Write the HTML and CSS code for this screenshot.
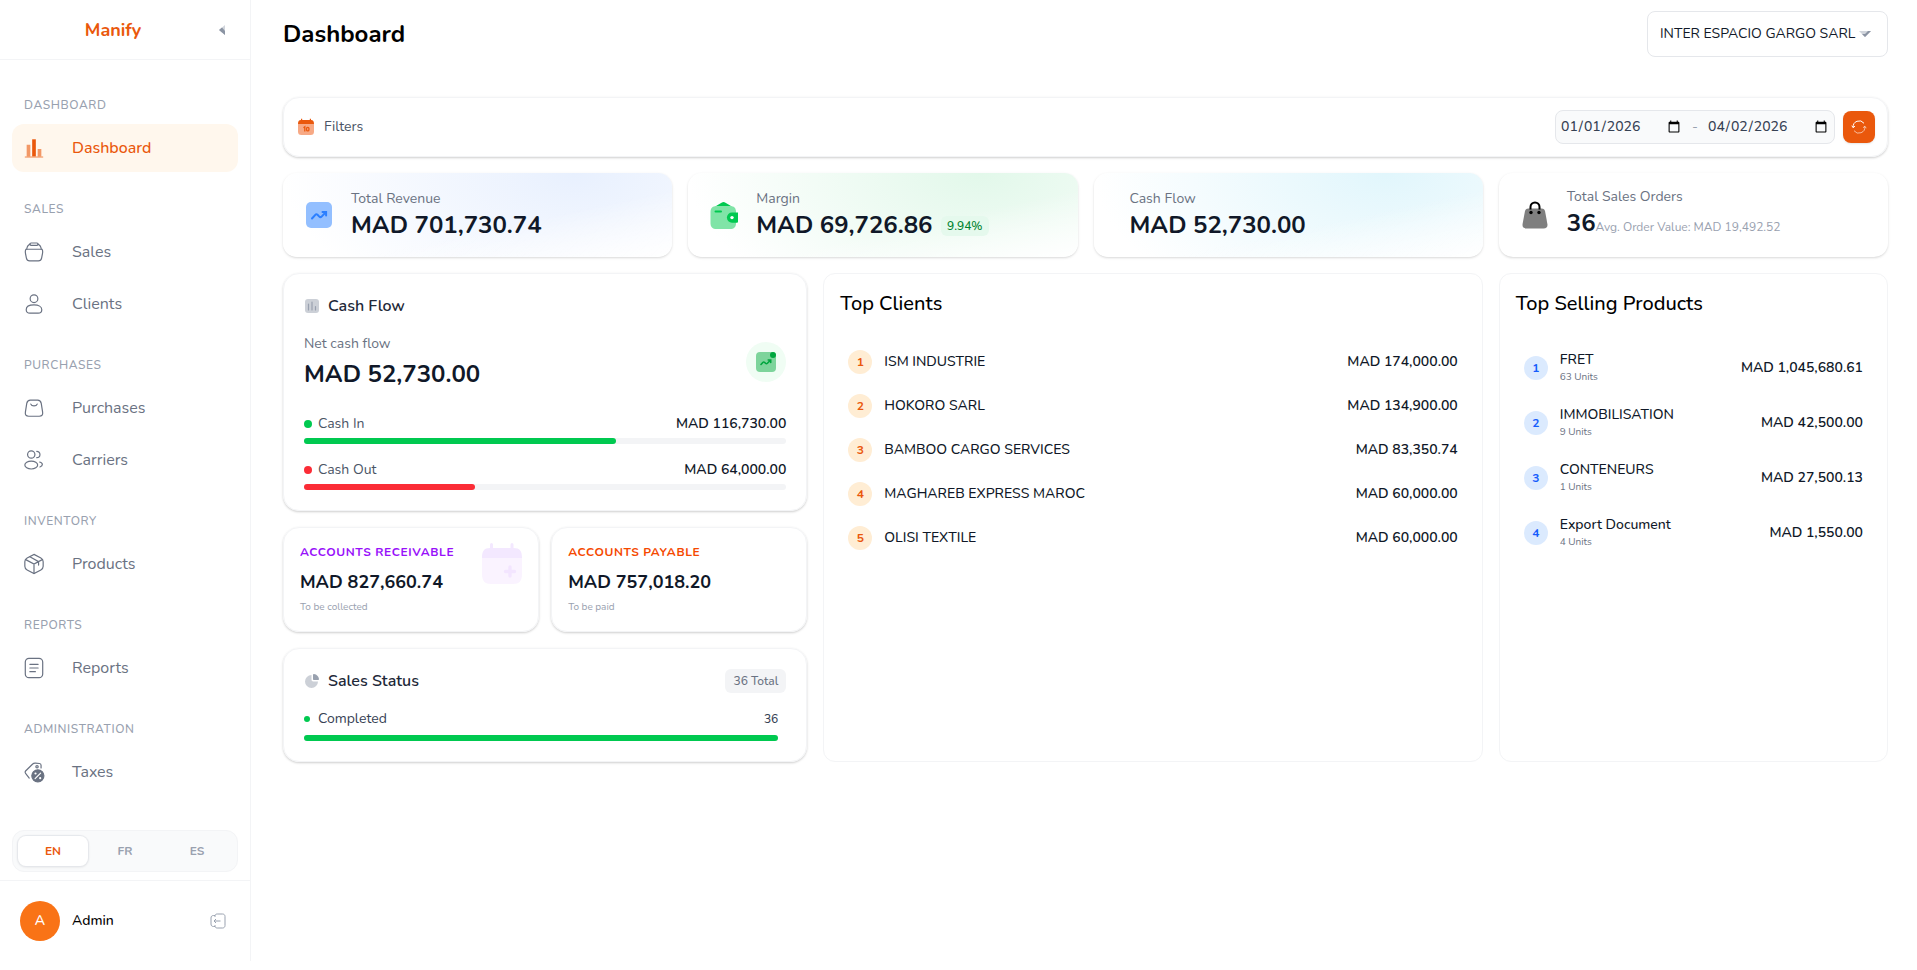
FILE: index.html
```html
<!DOCTYPE html>
<html lang="en">
<head>
  <meta charset="UTF-8">
  <meta name="viewport" content="width=device-width, initial-scale=1.0">
  <title>Manify - Dashboard</title>
  <link rel="stylesheet" href="styles.css">
</head>
<body>
<div class="app">
  <aside class="sidebar">
    <div class="brand">
      <span class="brand-name">Manify</span>
      <button class="collapse-btn" aria-label="Collapse menu">
        <svg viewBox="0 0 14 14"><path d="M9 2v10L3 7z" fill="#d1d5dc"/><path d="M3 7l3-2.500L9 8v4z" fill="#8b94a3"/></svg>
      </button>
    </div>

    <nav class="nav">
      <h3>Dashboard</h3>
      <a href="#" class="nav-item active">
        <svg viewBox="0 0 24 24" fill="currentColor"><path d="M2 21.2h20v1.3H2z" opacity=".6"/><path d="M4 8.5h4v12.7H4zM16 13h4v8.2h-4z" opacity=".6"/><path d="M10 2.5h4v18.7h-4z"/></svg>
        <span>Dashboard</span>
      </a>

      <h3>Sales</h3>
      <a href="#" class="nav-item">
        <svg viewBox="0 0 24 24" class="line"><path d="M3.2 9h17.6c.9 1.3.8 3 .4 5l-.9 4.6c-.5 2.2-1.500 3-3.500 3H7.2c-2 0-3-.8-3.500-3L2.800 14c-.4-2-.5-3.700.4-5z"/><path d="M4 9c.5-3 1.600-5 4-5.600M20 9c-.5-3-1.600-5-4-5.600"/><rect x="7.5" y="2.2" width="9" height="2.6" rx="1.3"/></svg>
        <span>Sales</span>
      </a>
      <a href="#" class="nav-item">
        <svg viewBox="0 0 24 24" class="line"><circle cx="12" cy="6.2" r="4.2"/><path d="M12 13c5 0 8.500 2 8.500 5.200 0 2.700-1.700 3.800-4 3.800h-9c-2.300 0-4-1.100-4-3.800C3.500 15 7 13 12 13z"/></svg>
        <span>Clients</span>
      </a>

      <h3>Purchases</h3>
      <a href="#" class="nav-item">
        <svg viewBox="0 0 24 24" class="line"><path d="M8 3.500h8c2.300 0 3.400 1 3.900 3.500l1.500 9.500c.5 3-.7 4.500-3.600 4.500H6.200c-2.900 0-4.100-1.500-3.600-4.500L4.100 7c.5-2.500 1.600-3.500 3.900-3.500z"/><path d="M8.500 7.800c1 2.600 6 2.600 7 0"/></svg>
        <span>Purchases</span>
      </a>
      <a href="#" class="nav-item">
        <svg viewBox="0 0 24 24" class="line"><circle cx="9" cy="6" r="4"/><path d="M15 9.500a3.500 3.500 0 0 0 0-7"/><ellipse cx="9" cy="17.5" rx="7" ry="4.3"/><path d="M18.200 14.200c1.700.4 2.900 1.400 2.900 2.700 0 1.200-1 2.200-2.600 2.700"/></svg>
        <span>Carriers</span>
      </a>

      <h3>Inventory</h3>
      <a href="#" class="nav-item">
        <svg viewBox="0 0 24 24" class="line"><path d="M12 1.500l7.500 4c1.800 1 2.500 2 2.500 4v5c0 2-.7 3-2.500 4L12 22.500l-7.500-4c-1.800-1-2.500-2-2.500-4v-5c0-2 .7-3 2.500-4z"/><path d="M21 7.200L12 12 3 7.200M12 12v10.300M7.500 4.200L17 9.500v3.700"/></svg>
        <span>Products</span>
      </a>

      <h3>Reports</h3>
      <a href="#" class="nav-item">
        <svg viewBox="0 0 24 24" class="line"><rect x="2.5" y="1.5" width="19" height="21" rx="4"/><path d="M7.500 8h9M7.500 12h9M7.500 16h6"/></svg>
        <span>Reports</span>
      </a>

      <h3>Administration</h3>
      <a href="#" class="nav-item">
        <svg viewBox="0 0 24 24" class="line"><path d="M6.800 18.700l-4-5.200c-.8-1-.8-1.700 0-2.600l7.500-7.400c1-1 2-1.300 3.200-1.200l4.500.4c1.100.1 1.700.8 1.700 1.800v3"/><circle cx="15.3" cy="6.3" r="1.3"/><circle cx="16.2" cy="16.2" r="6.6" fill="#6a7282"/><path d="M13.200 19.200l6-6" stroke="#fff"/><path d="M13.600 13.600h.1M18.700 18.700h.1" stroke="#fff" stroke-width="2.3"/></svg>
        <span>Taxes</span>
      </a>
    </nav>

    <div class="langs">
      <button class="lang selected">EN</button>
      <button class="lang">FR</button>
      <button class="lang">ES</button>
    </div>

    <div class="user">
      <span class="avatar">A</span>
      <span class="user-name">Admin</span>
      <button class="logout-btn" aria-label="Log out">
        <svg viewBox="0 0 16 16" fill="none" stroke="#99a1af"><path d="M5 4V3.200C5 1.800 5.800 1 7.200 1h5.300C14 1 15 2 15 3.500v9c0 1.500-1 2.500-2.500 2.500H7.200C5.800 15 5 14.200 5 12.800V12"/><path d="M5 2.500H3.500C2 2.500 1 3.300 1 5v6c0 1.700 1 2.500 2.500 2.500H5M10.500 8H4M6 6L4 8l2 2"/></svg>
      </button>
    </div>
  </aside>

  <main class="main">
    <header class="topbar">
      <h1>Dashboard</h1>
      <div class="company">
        <select aria-label="Company">
          <option>INTER ESPACIO GARGO SARL</option>
        </select>
        <svg viewBox="0 0 12 8"><path d="M0 1h12L6 7z" fill="#d1d5dc"/><path d="M12 1L6 7 3 4l3 0 3-3z" fill="#8b94a3"/></svg>
      </div>
    </header>

    <section class="filters">
      <svg class="filter-icon" viewBox="0 0 18 18"><path d="M1 6h16v7.500c0 2.500-1 3.500-3.500 3.500h-9C2 17 1 16 1 13.500z" fill="#f7a985"/><path d="M1 6c0-2.700.8-4 3-4V.8h1.200V2h7.600V.8H14V2c2.200 0 3 1.300 3 4z" fill="#ea580c"/><path d="M6.500 9.700l1.300-.9v4.700" fill="none" stroke="#ea580c" stroke-width="1.3"/><rect x="9.6" y="9.3" width="2.3" height="3.6" rx="1" fill="none" stroke="#ea580c" stroke-width="1.3"/></svg>
      <span>Filters</span>
      <div class="dates">
        <input type="date" value="2026-01-01" aria-label="Start date">
        <span class="dash">-</span>
        <input type="date" value="2026-04-02" aria-label="End date">
      </div>
      <button class="refresh-btn" aria-label="Refresh">
        <svg viewBox="0 0 16 16" fill="none" stroke="#fff"><path d="M2.200 8.500A6 6 0 0 1 13 4.300"/><path d="M.8 6.700l1.400 2 1.800-1.600"/><path d="M13.800 7.500A6 6 0 0 1 3 11.700M15.200 9.200l-1.400-2L12 8.800" opacity=".6"/></svg>
      </button>
    </section>

    <section class="stats">
      <div class="stat blue">
        <svg viewBox="0 0 28 28"><rect x="1" y="1" width="26" height="26" rx="5" fill="#93bfff"/><path d="M7 17.500l3.300-3.700c.8-.9 1.400-.8 2.200 0l1.800 1.800c.8.8 1.500.8 2.300 0l4.400-4.600M17.500 11h3.600v3.600" fill="none" stroke="#2b7fff" stroke-width="2" stroke-linecap="round"/></svg>
        <div>
          <p class="stat-label">Total Revenue</p>
          <p class="stat-value">MAD 701,730.74</p>
        </div>
      </div>
      <div class="stat green">
        <svg viewBox="0 0 28 28"><path d="M6 5l5.500-3.300c1.600-1 2.500-1 4 0L21 5z" fill="#00c950"/><path d="M7 5h13c4 0 6 2 6 6v11c0 4-2 6-6 6H6.500c-4 0-6-2-6-6V11c0-4 2-6 6.500-6z" fill="#80e4a7"/><path d="M5.500 10.500H11" stroke="#00c950" stroke-width="2" stroke-linecap="round"/><path d="M28 11.500h-6a5 5 0 0 0 0 10.200h4.500c1 0 1.500-.5 1.500-1.500z" fill="#00c950"/><circle cx="22" cy="16.6" r="1.7" fill="#fff"/></svg>
        <div>
          <p class="stat-label">Margin</p>
          <p class="stat-value">MAD 69,726.86 <span class="pill">9.94%</span></p>
        </div>
      </div>
      <div class="stat cyan">
        <div>
          <p class="stat-label">Cash Flow</p>
          <p class="stat-value">MAD 52,730.00</p>
        </div>
      </div>
      <div class="stat">
        <svg viewBox="0 0 28 28"><path d="M7.500 7.500h13c2.300 0 3.200 1 3.600 3l2.300 12.500c.5 3-.9 4.500-3.800 4.500H5.400c-2.900 0-4.300-1.500-3.800-4.500l2.300-12.500c.4-2 1.300-3 3.600-3z" fill="#7f7f7f"/><path d="M9.500 8.500V6a4.500 4.500 0 0 1 9 0v2.500" fill="none" stroke="#000" stroke-width="2"/><circle cx="10" cy="11.5" r="1.7"/><circle cx="18" cy="11.5" r="1.7"/></svg>
        <div>
          <p class="stat-label">Total Sales Orders</p>
          <p class="stat-value">36<small>Avg. Order Value: MAD 19,492.52</small></p>
        </div>
      </div>
    </section>

    <section class="panels">
      <div class="column">
        <div class="card">
          <h2 class="card-title">
            <svg viewBox="0 0 14 14"><rect width="14" height="14" rx="3" fill="#ccd0d7"/><path d="M3.500 5v6M7 3v8M10.500 7.500V11" stroke="#99a1af" stroke-width="1.2" stroke-linecap="round"/></svg>
            Cash Flow
          </h2>
          <div class="net">
            <div>
              <p class="net-label">Net cash flow</p>
              <p class="net-value">MAD 52,730.00</p>
            </div>
            <span class="net-icon">
              <svg viewBox="0 0 20 20"><rect width="20" height="20" rx="4" fill="#7dd49b"/><path d="M5 12.500l1.800-2c.7-.7 1.200-.7 1.900 0l.8.8c.7.7 1.200.7 1.900 0l3-3.100M12.200 8h2.500v2.500" fill="none" stroke="#00a63e" stroke-width="1.6" stroke-linecap="round"/><circle cx="17" cy="3" r="3" fill="#00a63e"/></svg>
            </span>
          </div>
          <div class="flow">
            <div class="flow-head"><i class="dot in"></i><span>Cash In</span><b>MAD 116,730.00</b></div>
            <div class="bar"><div class="fill in" style="width: 64.6%"></div></div>
          </div>
          <div class="flow">
            <div class="flow-head"><i class="dot out"></i><span>Cash Out</span><b>MAD 64,000.00</b></div>
            <div class="bar"><div class="fill out" style="width: 35.4%"></div></div>
          </div>
        </div>

        <div class="accounts">
          <div class="account receivable">
            <h3>Accounts Receivable</h3>
            <p class="account-value">MAD 827,660.74</p>
            <p class="account-note">To be collected</p>
            <svg viewBox="0 0 40 42"><path d="M0 15h40v16c0 7-3 10-9 10H9c-6 0-9-3-9-10z" fill="#faf3ff"/><path d="M0 15c0-7 2-10 8-10V1.500a1.500 1.500 0 0 1 3 0V5h17.500V1.500a1.500 1.500 0 0 1 3 0V5C38 5 40 8 40 15z" fill="#f3e8ff"/><path d="M28 24v9M23.500 28.500h9" stroke="#f3e5ff" stroke-width="3.4" stroke-linecap="round"/></svg>
          </div>
          <div class="account payable">
            <h3>Accounts Payable</h3>
            <p class="account-value">MAD 757,018.20</p>
            <p class="account-note">To be paid</p>
          </div>
        </div>

        <div class="card">
          <div class="status-head">
            <h2 class="card-title">
              <svg viewBox="0 0 14 14"><path d="M6.500 1v4.500c0 1.300.6 2 2 2H13A6.500 6.500 0 1 1 6.500 1z" fill="#ccd0d7"/><path d="M8 .5C8 .2 8.500 0 9 0c2.800.5 4.500 2.200 5 5 0 .6-.3 1-.8 1H9c-.7 0-1-.3-1-1z" fill="#99a1af"/></svg>
              Sales Status
            </h2>
            <span class="total">36 Total</span>
          </div>
          <div class="status-row">
            <div class="flow-head"><i class="dot small in"></i><span>Completed</span><em>36</em></div>
            <div class="bar"><div class="fill in" style="width: 100%"></div></div>
          </div>
        </div>
      </div>

      <div class="list-card clients">
        <h2>Top Clients</h2>
        <ol>
          <li><i>1</i><span>ISM INDUSTRIE</span><b>MAD 174,000.00</b></li>
          <li><i>2</i><span>HOKORO SARL</span><b>MAD 134,900.00</b></li>
          <li><i>3</i><span>BAMBOO CARGO SERVICES</span><b>MAD 83,350.74</b></li>
          <li><i>4</i><span>MAGHAREB EXPRESS MAROC</span><b>MAD 60,000.00</b></li>
          <li><i>5</i><span>OLISI TEXTILE</span><b>MAD 60,000.00</b></li>
        </ol>
      </div>

      <div class="list-card products">
        <h2>Top Selling Products</h2>
        <ol>
          <li><i>1</i><span>FRET<small>63 Units</small></span><b>MAD 1,045,680.61</b></li>
          <li><i>2</i><span>IMMOBILISATION<small>9 Units</small></span><b>MAD 42,500.00</b></li>
          <li><i>3</i><span>CONTENEURS<small>1 Units</small></span><b>MAD 27,500.13</b></li>
          <li><i>4</i><span>Export Document<small>4 Units</small></span><b>MAD 1,550.00</b></li>
        </ol>
      </div>
    </section>
  </main>
</div>
</body>
</html>
```

FILE: styles.css
```css
* {
  box-sizing: border-box;
  margin: 0;
  padding: 0;
}
body {
  font-family: "Nunito", "Lato", "Open Sans", sans-serif;
  font-size: 14px;
  line-height: 20px;
  color: #101828;
  background: #fff;
}
button {
  font-family: inherit;
  border: none;
  background: none;
  cursor: pointer;
}
svg {
  display: block;
  flex-shrink: 0;
}
i, em {
  font-style: normal;
}
b {
  font-weight: 600;
}

.app {
  display: flex;
  align-items: flex-start;
}

/* sidebar */
.sidebar {
  width: 251px;
  flex-shrink: 0;
  border-right: 1px solid #f3f4f6;
}
.brand {
  display: flex;
  align-items: center;
  height: 60px;
  padding: 0 20px 0 10px;
  border-bottom: 1px solid #f3f4f6;
}
.brand-name {
  flex: 1;
  text-align: center;
  font-size: 18px;
  font-weight: 700;
  color: #ea580c;
}
.collapse-btn svg {
  width: 14px;
  height: 14px;
}
.nav {
  padding: 12px 12px 30px;
}
.nav h3 {
  padding: 25px 12px 11px;
  font-size: 12px;
  line-height: 16px;
  font-weight: 500;
  letter-spacing: 0.05em;
  text-transform: uppercase;
  color: #99a1af;
}
.nav-item {
  display: flex;
  align-items: center;
  gap: 27px;
  height: 48px;
  margin-bottom: 4px;
  padding: 0 11px;
  border-radius: 12px;
  font-size: 16px;
  color: #6a7282;
  text-decoration: none;
}
.nav-item svg {
  width: 22px;
  height: 22px;
}
.nav-item.active {
  background: #fff7ed;
  color: #ea580c;
  font-weight: 500;
}
.line {
  fill: none;
  stroke: #6a7282;
  stroke-width: 1.3;
  stroke-linecap: round;
}
.langs {
  display: flex;
  gap: 2px;
  margin: 0 12px 8px;
  padding: 5px;
  border: 1px solid #f3f4f6;
  border-radius: 12px;
  background: #f9fafb;
}
.lang {
  flex: 1;
  height: 30px;
  border-radius: 8px;
  font-size: 12px;
  font-weight: 700;
  color: #99a1af;
}
.lang.selected {
  background: #fff;
  color: #ea580c;
  box-shadow: 0 0 1px 1px #e5e7eb, 0 1px 3px rgba(0, 0, 0, 0.1);
}
.user {
  display: flex;
  align-items: center;
  gap: 12px;
  padding: 20px 24px 20px 20px;
  border-top: 1px solid #f3f4f6;
  font-weight: 500;
  color: #000;
}
.avatar {
  width: 40px;
  height: 40px;
  border-radius: 50%;
  background: #f97316;
  color: #fff;
  font-weight: 600;
  line-height: 40px;
  text-align: center;
}
.user-name {
  flex: 1;
}
.logout-btn svg {
  width: 16px;
  height: 16px;
}

/* main area */
.main {
  flex: 1;
  min-width: 0;
  padding: 11px 29px 32px 32px;
}
.topbar {
  display: flex;
  align-items: center;
  justify-content: space-between;
  margin-bottom: 40px;
}
.topbar h1 {
  font-size: 24px;
  line-height: 32px;
  font-weight: 700;
  color: #000;
}
.company {
  position: relative;
}
.company select {
  height: 46px;
  padding: 0 31px 0 12px;
  border: 1px solid #e5e7eb;
  border-radius: 8px;
  appearance: none;
  background: #fff;
  font: inherit;
  color: #101828;
}
.company svg {
  position: absolute;
  right: 17px;
  top: 19px;
  width: 12px;
  height: 8px;
  pointer-events: none;
}

.filters {
  display: flex;
  align-items: center;
  height: 60px;
  margin-bottom: 16px;
  padding: 0 12px 0 13px;
  border: 1px solid #f3f4f6;
  border-radius: 16px;
  box-shadow: 0 1px 3px rgba(0, 0, 0, 0.1), 0 1px 2px rgba(0, 0, 0, 0.1);
  color: #4a5565;
}
.filter-icon {
  width: 18px;
  height: 18px;
  margin-right: 9px;
}
.dates {
  display: flex;
  align-items: center;
  height: 34px;
  margin-left: auto;
  padding: 0 4px;
  border: 1px solid #e5e7eb;
  border-radius: 8px;
  background: #f9fafb;
}
.dates input {
  width: 123px;
  border: none;
  background: transparent;
  font: inherit;
  font-weight: 500;
  color: #364153;
}
.dash {
  width: 24px;
  text-align: center;
  color: #99a1af;
}
.refresh-btn {
  display: flex;
  align-items: center;
  justify-content: center;
  width: 32px;
  height: 32px;
  margin-left: 8px;
  border-radius: 8px;
  background: #ea580c;
  box-shadow: 0 1px 2px rgba(0, 0, 0, 0.1);
}
.refresh-btn svg {
  width: 16px;
  height: 16px;
}

/* top numbers */
.stats {
  display: grid;
  grid-template-columns: repeat(4, 1fr);
  gap: 16px;
  margin-bottom: 16px;
}
.stat {
  display: flex;
  align-items: center;
  gap: 18px;
  height: 84px;
  padding: 0 22px;
  border-radius: 14px;
  box-shadow: 0 1px 3px rgba(0, 0, 0, 0.1), 0 1px 2px rgba(0, 0, 0, 0.06);
}
.stat > svg {
  width: 28px;
  height: 28px;
}
.stat.blue {
  background: linear-gradient(to bottom right, transparent 60%, #fff), radial-gradient(ellipse 75% 180% at 75% 0, #e8f0fe, #fff);
}
.stat.green {
  background: linear-gradient(to bottom right, transparent 60%, #fff), radial-gradient(ellipse 75% 180% at 75% 0, #e2f8ea, #fff);
}
.stat.cyan {
  padding-left: 36px;
  background: linear-gradient(to bottom right, transparent 60%, #fff), radial-gradient(ellipse 75% 180% at 75% 0, #e1f6fc, #fff);
}
.stat-label {
  color: #6a7282;
}
.stat-value {
  font-size: 24px;
  line-height: 32px;
  font-weight: 700;
}
.stat-value small {
  font-size: 12px;
  font-weight: 400;
  color: #99a1af;
}
.pill {
  display: inline-block;
  margin-left: 2px;
  padding: 2px 6px;
  border-radius: 6px;
  background: #e5f9ed;
  font-size: 12px;
  line-height: 16px;
  font-weight: 500;
  vertical-align: 3px;
  color: #00832f;
}

/* panels */
.panels {
  display: grid;
  grid-template-columns: repeat(12, 1fr);
  gap: 16px;
}
.column {
  grid-column: span 4;
  display: flex;
  flex-direction: column;
  gap: 16px;
}
.card, .account {
  border: 1px solid #f3f4f6;
  border-radius: 16px;
  box-shadow: 0 1px 3px rgba(0, 0, 0, 0.1), 0 1px 2px rgba(0, 0, 0, 0.1);
}
.card {
  padding: 20px;
}
.card-title {
  display: flex;
  align-items: center;
  gap: 9px;
  padding-left: 1px;
  font-size: 16px;
  line-height: 24px;
  font-weight: 600;
  color: #1e2939;
}
.card-title svg {
  width: 14px;
  height: 14px;
}
.net {
  display: flex;
  align-items: center;
  justify-content: space-between;
  margin: 16px 0 24px;
}
.net-label {
  margin-bottom: 4px;
  color: #6a7282;
}
.net-value {
  font-size: 24px;
  line-height: 32px;
  font-weight: 700;
}
.net-icon {
  display: flex;
  align-items: center;
  justify-content: center;
  width: 40px;
  height: 40px;
  border-radius: 50%;
  background: #f0fdf4;
}
.net-icon svg {
  width: 20px;
  height: 20px;
}
.flow + .flow {
  margin-top: 16px;
}
.flow-head {
  display: flex;
  align-items: center;
  gap: 6px;
  margin-bottom: 4px;
  color: #4a5565;
}
.flow-head b, .flow-head em {
  margin-left: auto;
}
.flow-head b {
  color: #101828;
}
.dot {
  width: 8px;
  height: 8px;
  border-radius: 50%;
}
.dot.small {
  width: 6px;
  height: 6px;
  margin-right: 2px;
}
.dot.in, .fill.in {
  background: #00c950;
}
.dot.out, .fill.out {
  background: #fb2c36;
}
.bar {
  height: 6px;
  border-radius: 3px;
  background: #f3f4f6;
}
.fill {
  height: 6px;
  border-radius: 3px;
}

.accounts {
  display: grid;
  grid-template-columns: 1fr 1fr;
  gap: 12px;
}
.account {
  position: relative;
  padding: 16px;
}
.account h3 {
  font-size: 12px;
  line-height: 16px;
  font-weight: 700;
  letter-spacing: 0.05em;
  text-transform: uppercase;
}
.account svg {
  position: absolute;
  top: 15px;
  right: 16px;
  width: 40px;
  height: 42px;
}
.receivable h3 {
  color: #9810fa;
}
.payable h3 {
  color: #f54900;
}
.account-value {
  margin: 8px 0 4px;
  font-size: 18px;
  line-height: 28px;
  font-weight: 700;
}
.account-note {
  font-size: 10px;
  line-height: 15px;
  color: #99a1af;
}

.status-head {
  display: flex;
  align-items: center;
  justify-content: space-between;
}
.total {
  padding: 4px 8px;
  border-radius: 6px;
  background: #f3f4f6;
  font-size: 12px;
  line-height: 16px;
  font-weight: 500;
  color: #6a7282;
}
.status-row {
  margin-top: 16px;
  padding-right: 8px;
}
.status-row .flow-head {
  margin-bottom: 6px;
  color: #364153;
}
.status-row em {
  font-size: 12px;
  font-weight: 500;
}

.list-card {
  padding: 16px;
  border: 1px solid #f3f4f6;
  border-radius: 12px;
}
.clients {
  grid-column: span 5;
}
.products {
  grid-column: span 3;
}
.list-card h2 {
  margin-bottom: 22px;
  font-size: 20px;
  line-height: 28px;
  font-weight: 500;
  color: #000;
}
.list-card ol {
  list-style: none;
}
.list-card li {
  display: flex;
  align-items: center;
  gap: 12px;
  min-height: 44px;
  padding: 8px;
}
.list-card li span {
  font-weight: 500;
}
.list-card li i {
  width: 24px;
  height: 24px;
  border-radius: 50%;
  font-size: 12px;
  line-height: 24px;
  font-weight: 700;
  text-align: center;
}
.list-card li b {
  margin-left: auto;
}
.clients i {
  background: #ffedd4;
  color: #ea580c;
}
.products i {
  background: #dbeafe;
  color: #155dfc;
}
.products li {
  min-height: 55px;
}
.products small {
  display: block;
  font-size: 10px;
  line-height: 15px;
  font-weight: 400;
  color: #6a7282;
}
```
